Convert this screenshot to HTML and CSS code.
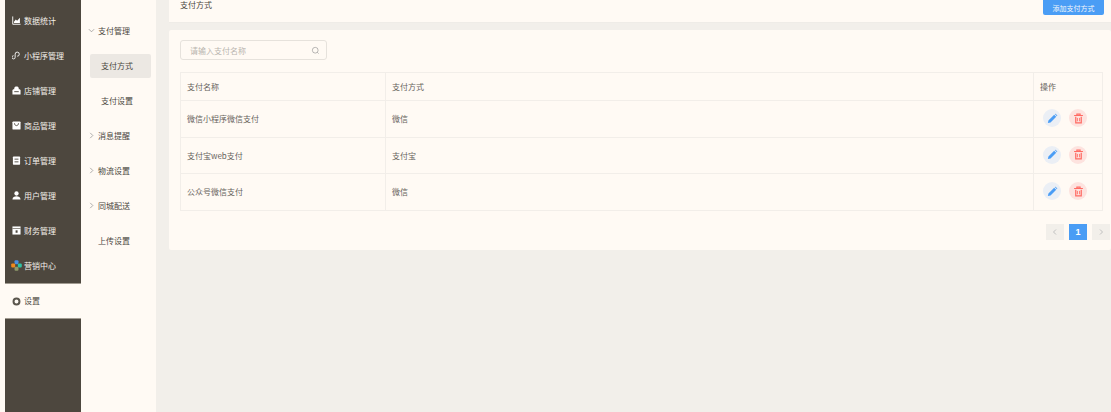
FILE: index.html
```html
<!DOCTYPE html>
<html lang="zh">
<head>
<meta charset="utf-8">
<title>支付方式</title>
<link rel="stylesheet" href="styles.css">
</head>
<body>
<div class="app">
  <nav class="side">
    <div class="side-item"><svg class="ico" viewBox="0 0 10 10"><path d="M.8.5v8.700H9.500" fill="none" stroke="#fff" stroke-width="1"/><path d="M2.200 7.800V6.500l2-2.500 1.500 1.200L8.800 2v5.800z" fill="#fff"/></svg>数据统计</div>
    <div class="side-item"><svg class="ico" viewBox="0 0 10 10"><path d="M3.500 3.500v3.500a1.800 1.800 0 1 1-1.800-1.800M3.500 3.500a2.300 2.300 0 1 1 2.300 2.300" fill="none" stroke="#fff" stroke-width="1"/></svg>小程序管理</div>
    <div class="side-item"><svg class="ico" viewBox="0 0 10 10"><path d="M2.500 3.500V2.500C2.500 1.200 3.700.5 5 .5s2.500.7 2.500 2v1h1l1 1v5H.5v-5l1-1z" fill="#fff"/><path d="M2.500 6.300h5" stroke="#4d473e" stroke-width="1"/></svg>店铺管理</div>
    <div class="side-item"><svg class="ico" viewBox="0 0 10 10"><rect x=".5" y=".5" width="9" height="9" rx="1" fill="#fff"/><path d="M2.800 2.500c0 3.500 4.400 3.500 4.400 0" fill="none" stroke="#4d473e" stroke-width="1"/></svg>商品管理</div>
    <div class="side-item"><svg class="ico" viewBox="0 0 10 10"><rect x="1" y=".5" width="8" height="9.300" rx=".8" fill="#fff"/><path d="M2.800 3.500h4.400M2.800 6.500h4.400" stroke="#4d473e" stroke-width="1"/></svg>订单管理</div>
    <div class="side-item"><svg class="ico" viewBox="0 0 10 10"><circle cx="5" cy="2.800" r="2.400" fill="#fff"/><path d="M.5 9.500c0-3 2.200-3.800 4.500-3.800s4.500.8 4.500 3.800z" fill="#fff"/></svg>用户管理</div>
    <div class="side-item"><svg class="ico" viewBox="0 0 10 10"><path d="M.5.500h9v9h-9z" fill="#fff"/><path d="M.5 2.800h9" stroke="#4d473e" stroke-width=".7"/><path d="M4 4.800h2.200v2.700H4z" fill="#4d473e"/></svg>财务管理</div>
    <div class="side-item"><svg class="ico ico-lg" viewBox="0 0 10 10"><rect x="3.200" y=".2" width="3.600" height="3.600" rx="1" fill="#4a90e2"/><rect x=".2" y="3.200" width="3.600" height="3.600" rx="1" fill="#f08a1d"/><rect x="6.200" y="3.200" width="3.600" height="3.600" rx="1" fill="#2ec4a6"/><rect x="3.200" y="6.200" width="3.600" height="3.600" rx="1" fill="#8f9a6a"/></svg>营销中心</div>
    <div class="side-item is-active"><svg class="ico" viewBox="0 0 10 10"><circle cx="5" cy="5" r="3.300" fill="none" stroke="#5a554c" stroke-width="2.200"/></svg>设置</div>
  </nav>

  <aside class="sub">
    <div class="sub-item"><svg class="chev" viewBox="0 0 8 8"><path d="M1 2.500L4 5.500 7 2.500" fill="none" stroke="#8c8c8c" stroke-width=".8"/></svg>支付管理</div>
    <div class="sub-child is-current">支付方式</div>
    <div class="sub-child">支付设置</div>
    <div class="sub-item"><svg class="chev" viewBox="0 0 8 8"><path d="M2.500 1L5.500 4 2.500 7" fill="none" stroke="#8c8c8c" stroke-width=".8"/></svg>消息提醒</div>
    <div class="sub-item"><svg class="chev" viewBox="0 0 8 8"><path d="M2.500 1L5.500 4 2.500 7" fill="none" stroke="#8c8c8c" stroke-width=".8"/></svg>物流设置</div>
    <div class="sub-item"><svg class="chev" viewBox="0 0 8 8"><path d="M2.500 1L5.500 4 2.500 7" fill="none" stroke="#8c8c8c" stroke-width=".8"/></svg>同城配送</div>
    <div class="sub-item"><span class="chev"></span>上传设置</div>
  </aside>

  <main class="main">
    <header class="top">
      <span class="top-title">支付方式</span>
      <button class="add">添加支付方式</button>
    </header>
    <section class="card">
      <div class="search">
        <span>请输入支付名称</span>
        <svg class="search-ico" viewBox="0 0 10 10"><circle cx="4.700" cy="4.700" r="3.200" fill="none" stroke="#8f8f8f" stroke-width=".7"/><path d="M7 7l1.500 1.500" stroke="#8f8f8f" stroke-width=".7"/></svg>
      </div>
      <table class="tbl">
        <colgroup><col class="c1"><col class="c2"><col class="c3"></colgroup>
        <thead>
          <tr><th>支付名称</th><th>支付方式</th><th>操作</th></tr>
        </thead>
        <tbody>
          <tr><td>微信小程序微信支付</td><td>微信</td><td><div class="ops">
            <span class="op op-edit"><svg viewBox="0 0 10 10"><path d="M.8 9.200l.5-2.400L6.500 1.600l1.900 1.900L3.200 8.700zM7.100 1l.7-.4 1.600 1.600-.4.700z" fill="#4a9df5"/></svg></span>
            <span class="op op-del"><svg viewBox="0 0 10 10"><path d="M1 2.300h8M3.500 2.300V1h3v1.300" fill="none" stroke="#ff6b63" stroke-width="1"/><path d="M2.500 3.300V9h5V3.300" fill="none" stroke="#ff6b63" stroke-width="1.100"/><path d="M4 4.500v3M6 4.500v3" stroke="#ff6b63" stroke-width=".8"/></svg></span>
          </div></td></tr>
          <tr><td>支付宝web支付</td><td>支付宝</td><td><div class="ops">
            <span class="op op-edit"><svg viewBox="0 0 10 10"><path d="M.8 9.200l.5-2.400L6.500 1.600l1.900 1.900L3.200 8.700zM7.100 1l.7-.4 1.600 1.600-.4.700z" fill="#4a9df5"/></svg></span>
            <span class="op op-del"><svg viewBox="0 0 10 10"><path d="M1 2.300h8M3.500 2.300V1h3v1.300" fill="none" stroke="#ff6b63" stroke-width="1"/><path d="M2.500 3.300V9h5V3.300" fill="none" stroke="#ff6b63" stroke-width="1.100"/><path d="M4 4.500v3M6 4.500v3" stroke="#ff6b63" stroke-width=".8"/></svg></span>
          </div></td></tr>
          <tr><td>公众号微信支付</td><td>微信</td><td><div class="ops">
            <span class="op op-edit"><svg viewBox="0 0 10 10"><path d="M.8 9.200l.5-2.400L6.500 1.600l1.900 1.900L3.200 8.700zM7.100 1l.7-.4 1.600 1.600-.4.700z" fill="#4a9df5"/></svg></span>
            <span class="op op-del"><svg viewBox="0 0 10 10"><path d="M1 2.300h8M3.500 2.300V1h3v1.300" fill="none" stroke="#ff6b63" stroke-width="1"/><path d="M2.500 3.300V9h5V3.300" fill="none" stroke="#ff6b63" stroke-width="1.100"/><path d="M4 4.500v3M6 4.500v3" stroke="#ff6b63" stroke-width=".8"/></svg></span>
          </div></td></tr>
        </tbody>
      </table>
      <div class="pager">
        <span class="pg"><svg viewBox="0 0 8 8"><path d="M5 1.500L2.500 4 5 6.500" fill="none" stroke="#c0c0c0" stroke-width="1"/></svg></span>
        <span class="pg pg-on">1</span>
        <span class="pg"><svg viewBox="0 0 8 8"><path d="M3 1.500L5.500 4 3 6.500" fill="none" stroke="#c0c0c0" stroke-width="1"/></svg></span>
      </div>
    </section>
  </main>
</div>
</body>
</html>
```

FILE: styles.css
```css
* { box-sizing: border-box; }
html, body { margin: 0; height: 100%; overflow: hidden; }
body { background: #fffaf4; font-family: "Noto Sans CJK SC", "Noto Sans", sans-serif; font-size: 8px; color: #4d4a45; }
.app { display: flex; height: 412px; padding-left: 5px; }

.side { width: 76px; background: #4d473e; padding-top: 3px; flex: none; }
.side-item { height: 35px; display: flex; align-items: center; padding-left: 7px; gap: 3px; color: #f4f0ea; line-height: 1; }
.ico { width: 9px; height: 9px; flex: none; }
.ico-lg { width: 11px; height: 11px; margin: 0 -1px; }
.side-item.is-active { background: #fffaf4; color: #4d473e; box-shadow: 0 -1px 0 #a09a90, 0 1px 0 #a09a90; height: 34px; margin-top: 1px; }

.sub { width: 75px; flex: none; background: #fffaf4; padding-top: 13px; display: flex; flex-direction: column; }
.sub-item { height: 35px; flex: none; display: flex; align-items: center; padding-left: 7px; gap: 3px; color: #4a4640; line-height: 1; }
.chev { width: 7px; height: 7px; flex: none; display: block; }
.sub-child { height: 24px; flex: none; width: 61px; margin: 5.500px 0 5.500px 9px; padding-left: 11px; display: flex; align-items: center; color: #4a4640; border-radius: 2px; }
.sub-child.is-current { background: #ece8e3; }

.main { flex: 1; background: #f2efea; padding-left: 13px; min-width: 0; }
.top { height: 23px; background: #fffaf4; display: flex; justify-content: space-between; align-items: flex-start; padding: 0 7px 0 11px; border-bottom: 1px solid #efece7; }
.top-title { line-height: 10px; color: #4a4640; }
.add { width: 61px; height: 15px; border: 0; border-radius: 0 0 2px 2px; background: #4a9df5; color: #f2f6fb; font: inherit; font-size: 7px; padding: 0; white-space: nowrap; }

.card { margin-top: 7px; height: 220px; background: #fffaf4; padding: 10px 7px 0 11px; border-radius: 2px; }
.search { width: 147px; height: 20px; border: 1px solid #e6e2dc; border-radius: 3px; display: flex; align-items: center; justify-content: space-between; padding: 0 6px 0 9px; color: #b9b5af; }
.search-ico { width: 9px; height: 9px; }

.tbl { width: 923px; margin-top: 12px; border-collapse: collapse; table-layout: fixed; }
.c1 { width: 205px; }
.c3 { width: 69px; }
.tbl th, .tbl td { border: 1px solid #f2eee9; padding: 0 6px; text-align: left; font-weight: 400; color: #66625c; }
.tbl th { height: 28px; }
.tbl td { height: 36.600px; }
.ops { display: flex; gap: 8px; padding-left: 3px; margin-top: -1px; }
.op { width: 18px; height: 18px; border-radius: 50%; display: flex; align-items: center; justify-content: center; }
.op svg { width: 11px; height: 11px; }
.op-edit { background: #ebeff5; }
.op-del { background: #fde3df; }

.pager { display: flex; justify-content: flex-end; gap: 5px; margin-top: 13px; margin-right: -6px; }
.pg { width: 18px; height: 16px; background: #f2efea; display: flex; align-items: center; justify-content: center; }
.pg svg { width: 8px; height: 8px; }
.pg-on { background: #4a9df5; color: #fff; font-weight: 700; font-family: "Liberation Sans", sans-serif; font-size: 9px; }
```
